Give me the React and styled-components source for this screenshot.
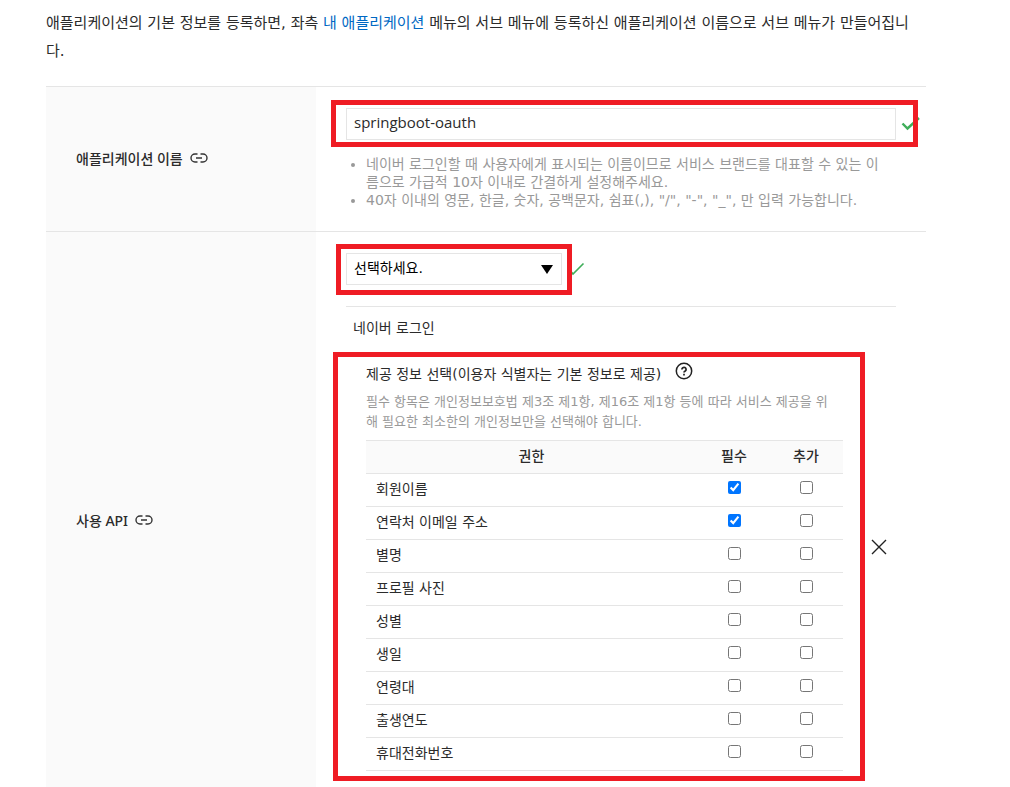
import React, { useState } from 'react';
import styled, { createGlobalStyle } from 'styled-components';

const GlobalStyle = createGlobalStyle`
  * {
    box-sizing: border-box;
  }

  body {
    margin: 0;
    background: #fff;
    color: #2b2b2b;
    font-family: 'DejaVu Sans', 'Noto Sans CJK KR', sans-serif;
    font-size: 14px;
  }

  input, select, button {
    font-family: inherit;
    color: inherit;
  }
`;

const Page = styled.main`
  height: 100vh;
  overflow-y: auto;
  scrollbar-width: none;
  padding: 9px 84px 0 46px;
`;

const Intro = styled.p`
  margin: 0 0 21px;
  font-size: 15px;
  line-height: 28px;
  word-break: break-all;

  a {
    color: #0068c3;
    text-decoration: none;
  }
`;

const Form = styled.form`
  border-top: 1px solid #e5e5e5;
`;

const FormRow = styled.div`
  display: flex;
  border-bottom: 1px solid #e5e5e5;
`;

const RowLabel = styled.div`
  display: flex;
  align-items: center;
  gap: 7px;
  flex: 0 0 270px;
  padding: 0 0 2px 30px;
  background: #fafafa;
  font-family: 'Noto Sans', 'Noto Sans CJK KR', sans-serif;
  font-weight: 500;
`;

const RowContent = styled.div`
  flex: 1;
  min-width: 0;
  padding: 21px 30px 22px;
`;

const Field = styled.div`
  position: relative;
  display: flex;
  width: ${(props) => props.$width || '100%'};
`;

const TextInput = styled.input`
  width: 100%;
  height: 32px;
  padding: 0 7px 4px;
  border: 1px solid #e5e5e5;
  background: #fff;
  font-family: 'Open Sans', 'Noto Sans CJK KR', sans-serif;
  font-size: 15px;
  outline: none;
`;

const Select = styled.select`
  width: 100%;
  height: 32px;
  padding: 0 7px 2px;
  border: 1px solid #e5e5e5;
  border-radius: 0;
  background: #fff;
  color: #000;
  font-size: 14px;
  appearance: none;
  outline: none;
`;

const SelectArrow = styled.svg`
  position: absolute;
  top: 12px;
  right: 9px;
  pointer-events: none;
`;

const FieldCheck = styled.svg`
  position: absolute;
  top: 9px;
  left: calc(100% + 5px);
`;

// red frame drawn around the part the reader has to fill in
const Highlight = styled.span`
  position: absolute;
  inset: ${(props) => props.$inset};
  border: 5px solid #ef1c24;
  pointer-events: none;
`;

const HelpList = styled.ul`
  margin: 15px 0 0;
  padding: 0 10px 0 20px;
  color: #999;
  line-height: 18px;
  word-break: break-all;
`;

const ApiItem = styled.div`
  display: flex;
  align-items: center;
  margin-top: 21px;
  border-top: 1px solid #e5e5e5;
`;

const ApiBody = styled.div`
  flex: 1;
  min-width: 0;
  padding: 11px 0 16px;
`;

const ApiName = styled.div`
  padding-left: 7px;
  line-height: 20px;
`;

const Permissions = styled.section`
  position: relative;
  margin-top: 24px;
  padding: 0 19px 0 20px;
`;

const PermissionTitle = styled.div`
  display: flex;
  align-items: center;
  gap: 14px;
  line-height: 24px;
`;

const PermissionNote = styled.p`
  margin: 6px 0 8px;
  padding-right: 6px;
  color: #999;
  font-size: 13px;
  line-height: 20px;
  word-break: break-all;
`;

const IconButton = styled.button`
  display: flex;
  align-items: center;
  justify-content: center;
  width: ${(props) => props.$size}px;
  height: ${(props) => props.$size}px;
  padding: 0;
  border: 0;
  background: none;
  cursor: pointer;
`;

const HelpButton = styled(IconButton)`
  margin-bottom: 6px;
`;

const Table = styled.table`
  width: 100%;
  border-collapse: collapse;
  border-top: 1px solid #e5e5e5;
  table-layout: fixed;

  th, td {
    height: 33px;
    padding: 0 2px 2px 0;
    border-bottom: 1px solid #e5e5e5;
    text-align: center;
    line-height: 20px;
  }

  thead th {
    background: #fafafa;
    font-weight: 500;
  }

  tbody th {
    padding-left: 10px;
    font-weight: 400;
    text-align: left;
  }
`;

const CheckColumn = styled.col`
  width: 72px;
`;

const Checkbox = styled.input`
  display: block;
  width: 13px;
  height: 13px;
  margin: 0 auto 4px;
`;

const PERMISSIONS = [
  '회원이름',
  '연락처 이메일 주소',
  '별명',
  '프로필 사진',
  '성별',
  '생일',
  '연령대',
  '출생연도',
  '휴대전화번호',
];

function LinkIcon() {
  return (
    <svg width="18" height="10" viewBox="0 0 18 10" fill="none" stroke="#333" strokeWidth="1.4" aria-hidden="true">
      <path d="M7.5 1H5a4 4 0 0 0 0 8h2.5M10.5 1H13a4 4 0 0 1 0 8h-2.5M6 5h6" />
    </svg>
  );
}

function CheckIcon({ thin }) {
  return (
    <FieldCheck width="20" height="14" viewBox="0 0 20 14" fill="none" stroke="#3fae5a" strokeWidth={thin ? 1.6 : 2.4} aria-hidden="true">
      <path d={thin ? 'M2 7l4 5L16.5 1.5' : 'M1.5 6.500l5 5L18 1'} />
    </FieldCheck>
  );
}

function HelpIcon() {
  return (
    <svg width="18" height="18" viewBox="0 0 18 18" fill="none" stroke="#222" aria-hidden="true">
      <circle cx="9" cy="9" r="7.7" strokeWidth="1.5" />
      <path d="M6.9 7.4a2.1 2 0 1 1 3.3 1.6c-.8.5-1.2.8-1.2 1.6" strokeWidth="1.7" />
      <path d="M9 11.700v1.700" strokeWidth="1.700" />
    </svg>
  );
}

function PermissionTable() {
  const [required, setRequired] = useState(['회원이름', '연락처 이메일 주소']);
  const [extra, setExtra] = useState([]);

  const toggle = (list, setList, name) => {
    setList(list.includes(name) ? list.filter((item) => item !== name) : [...list, name]);
  };

  return (
    <Table>
      <colgroup>
        <col />
        <CheckColumn />
        <CheckColumn />
      </colgroup>
      <thead>
        <tr>
          <th scope="col">권한</th>
          <th scope="col">필수</th>
          <th scope="col">추가</th>
        </tr>
      </thead>
      <tbody>
        {PERMISSIONS.map((name) => (
          <tr key={name}>
            <th scope="row">{name}</th>
            <td>
              <Checkbox
                type="checkbox"
                aria-label={`${name} 필수`}
                checked={required.includes(name)}
                onChange={() => toggle(required, setRequired, name)}
              />
            </td>
            <td>
              <Checkbox
                type="checkbox"
                aria-label={`${name} 추가`}
                checked={extra.includes(name)}
                onChange={() => toggle(extra, setExtra, name)}
              />
            </td>
          </tr>
        ))}
      </tbody>
    </Table>
  );
}

function App() {
  const [appName, setAppName] = useState('springboot-oauth');

  return (
    <>
      <GlobalStyle />
      <Page>
        <Intro>
          애플리케이션의 기본 정보를 등록하면, 좌측 <a href="#apps">내 애플리케이션</a> 메뉴의 서브 메뉴에 등록하신 애플리케이션 이름으로 서브 메뉴가 만들어집니다.
        </Intro>
        <Form>
          <FormRow>
            <RowLabel>
              <label htmlFor="app-name">애플리케이션 이름</label>
              <LinkIcon />
            </RowLabel>
            <RowContent>
              <Field>
                <TextInput
                  id="app-name"
                  type="text"
                  value={appName}
                  onChange={(e) => setAppName(e.target.value)}
                />
                <CheckIcon />
                <Highlight $inset="-8px -22px -7px -15px" />
              </Field>
              <HelpList>
                <li>네이버 로그인할 때 사용자에게 표시되는 이름이므로 서비스 브랜드를 대표할 수 있는 이름으로 가급적 10자 이내로 간결하게 설정해주세요.</li>
                <li>40자 이내의 영문, 한글, 숫자, 공백문자, 쉼표(,), "/", "-", "_", 만 입력 가능합니다.</li>
              </HelpList>
            </RowContent>
          </FormRow>
          <FormRow>
            <RowLabel>
              <label htmlFor="api">사용 API</label>
              <LinkIcon />
            </RowLabel>
            <RowContent>
              <Field $width="216px">
                <Select id="api">
                  <option>선택하세요.</option>
                </Select>
                <SelectArrow width="12" height="9" viewBox="0 0 12 9" aria-hidden="true">
                  <path d="M0 0h12L6 9z" />
                </SelectArrow>
                <CheckIcon thin />
                <Highlight $inset="-9px -10px -10px -10px" />
              </Field>
              <ApiItem>
                <ApiBody>
                  <ApiName>네이버 로그인</ApiName>
                  <Permissions>
                    <Highlight $inset="-10px -3px -10px -13px" />
                    <PermissionTitle>
                      제공 정보 선택(이용자 식별자는 기본 정보로 제공)
                      <HelpButton type="button" $size={18} aria-label="도움말">
                        <HelpIcon />
                      </HelpButton>
                    </PermissionTitle>
                    <PermissionNote>
                      필수 항목은 개인정보보호법 제3조 제1항, 제16조 제1항 등에 따라 서비스 제공을 위해 필요한 최소한의 개인정보만을 선택해야 합니다.
                    </PermissionNote>
                    <PermissionTable />
                  </Permissions>
                </ApiBody>
                <IconButton type="button" $size={34} aria-label="삭제">
                  <svg width="16" height="16" viewBox="0 0 16 16" fill="none" stroke="#222" strokeWidth="1.4" aria-hidden="true">
                    <path d="M1 1l14 14M15 1L1 15" />
                  </svg>
                </IconButton>
              </ApiItem>
            </RowContent>
          </FormRow>
        </Form>
      </Page>
    </>
  );
}

export default App;
